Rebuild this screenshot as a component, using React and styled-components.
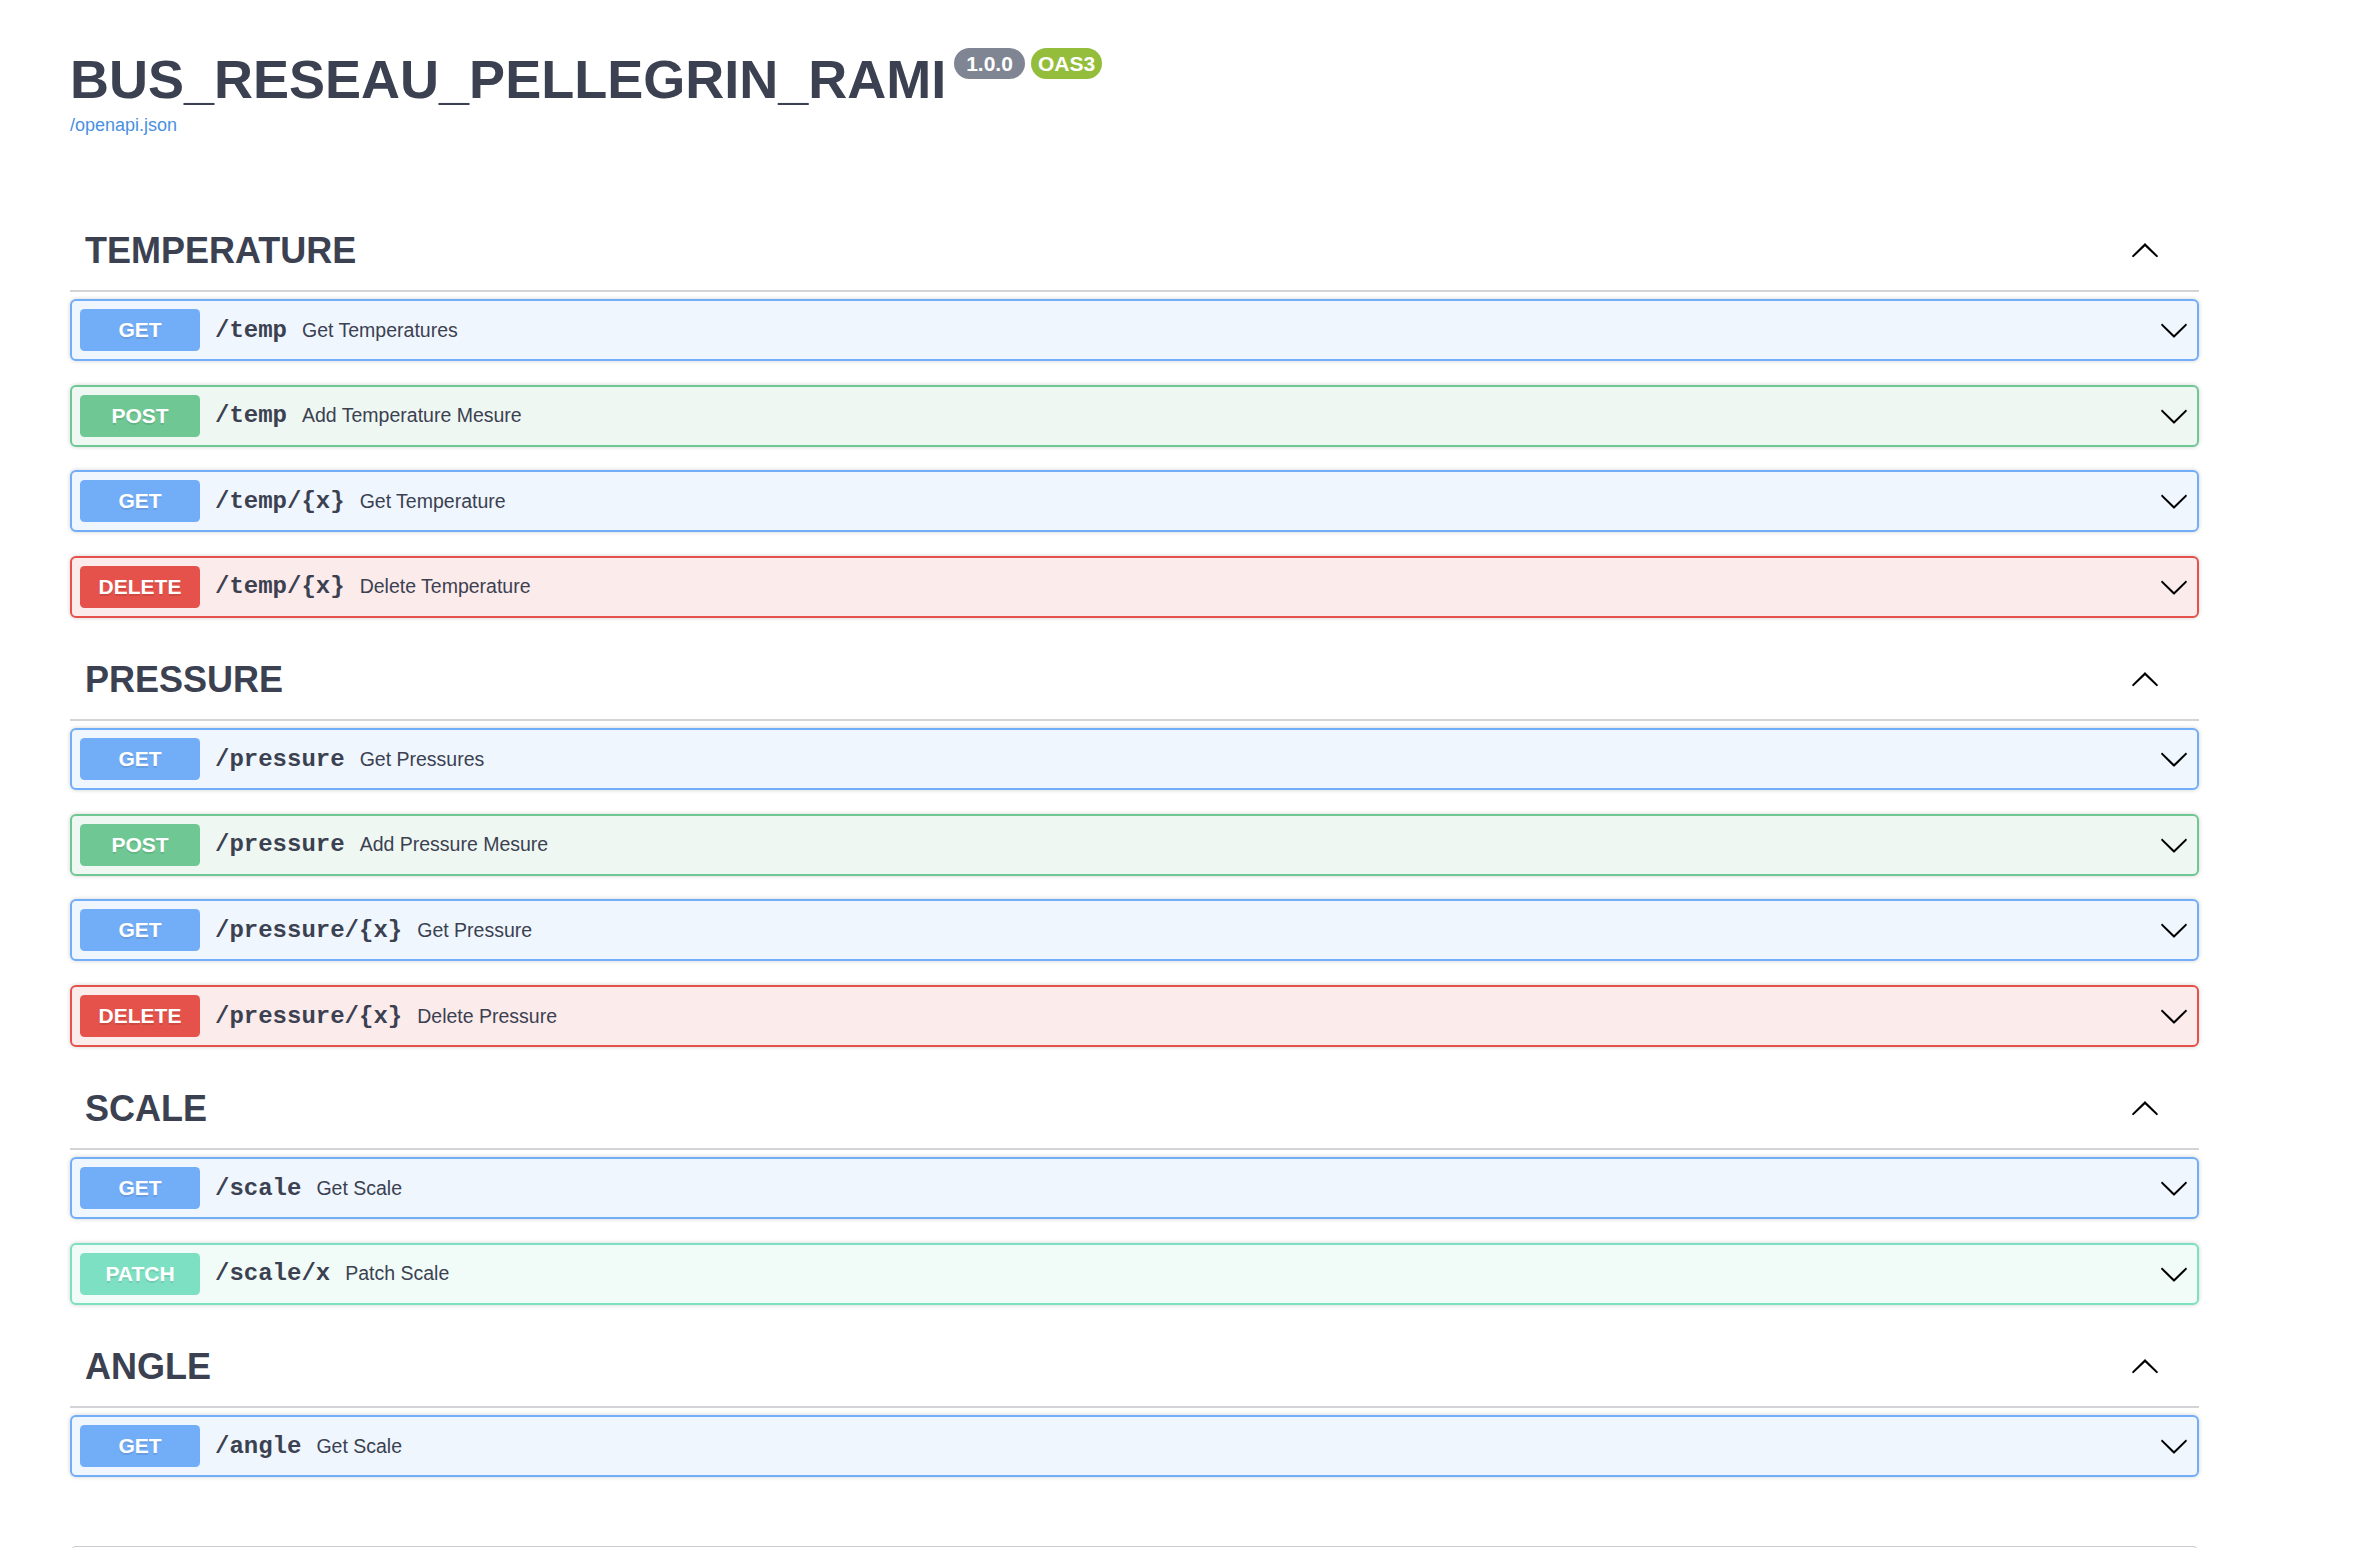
import React from "react";
import styled, { createGlobalStyle } from "styled-components";

const GlobalStyle = createGlobalStyle`
  html { overflow: hidden; }
  body {
    margin: 0;
    background: #ffffff;
    font-family: "Liberation Sans", Arial, sans-serif;
    color: #3b4151;
  }
  * { box-sizing: border-box; }
`;

const METHODS = {
  get: { main: "#72adf7", bg: "#eff6fe" },
  post: { main: "#6fc794", bg: "#eff7f3" },
  delete: { main: "#e5514b", bg: "#fcebeb" },
  patch: { main: "#7de0c2", bg: "#f1fbf8" },
};

const Wrapper = styled.div`
  display: flex;
  flex-direction: column;
  width: 2189px;
  margin-left: 40px;
  padding: 0 30px;
`;

const Info = styled.div`
  display: flex;
  flex-direction: column;
  padding-top: 48px;
  margin-bottom: 76.5px;
`;

const Title = styled.h2`
  display: flex;
  align-items: flex-start;
  margin: 0;
  height: 62px;
  font-size: 54px;
  line-height: 62px;
  font-weight: 700;
  color: #3b4151;
`;

const Badge = styled.small`
  display: inline-flex;
  align-items: center;
  height: 31px;
  margin: 0 0 0 ${(p) => (p.$stamp ? 6 : 8)}px;
  padding: 0 ${(p) => (p.$stamp ? 7 : 12)}px;
  border-radius: 40px;
  background: ${(p) => (p.$stamp ? "#93bd3b" : "#7f8592")};
  color: #ffffff;
  font-size: 21px;
  font-weight: 700;
  line-height: 31px;
`;

const SpecLink = styled.a`
  display: block;
  margin-top: 5px;
  font-size: 18px;
  line-height: 21px;
  color: #4990e2;
  text-decoration: none;
`;

const TagSection = styled.section`
  display: flex;
  flex-direction: column;
`;

const TagHeading = styled.h3`
  display: flex;
  align-items: center;
  height: 79px;
  margin: 0 0 7.5px;
  padding: 0 30px 0 15px;
  border-bottom: 2px solid #d3d4d7;
  font-size: 36px;
  font-weight: 700;
  color: #3b4151;
`;

const TagName = styled.span`
  flex: 1 1 auto;
`;

const IconButton = styled.button`
  display: flex;
  align-items: center;
  justify-content: center;
  padding: 0 ${(p) => p.$pad}px;
  border: none;
  background: none;
  cursor: pointer;
  svg {
    display: block;
    width: 30px;
    height: 30px;
    fill: #000000;
  }
`;

const OpBlock = styled.div`
  display: flex;
  align-items: center;
  height: 62px;
  margin: 0 0 23.67px;
  padding: 0 8px;
  border: 2px solid ${(p) => METHODS[p.$method].main};
  border-radius: 6px;
  background: ${(p) => METHODS[p.$method].bg};
  box-shadow: 0 0 4.5px rgba(0, 0, 0, 0.19);
`;

const Method = styled.span`
  display: block;
  min-width: 120px;
  height: 42px;
  border-radius: 4.5px;
  background: ${(p) => METHODS[p.$method].main};
  color: #ffffff;
  font-size: 21px;
  font-weight: 700;
  line-height: 42px;
  text-align: center;
  text-shadow: 0 1.5px 0 rgba(0, 0, 0, 0.1);
`;

const Path = styled.span`
  padding: 0 15px;
  font-family: "Liberation Mono", "Courier New", monospace;
  font-size: 24px;
  font-weight: 700;
  color: #3b4151;
`;

const Description = styled.span`
  flex: 1 1 auto;
  font-size: 19.5px;
  color: #3b4151;
`;

const Models = styled.section`
  height: 72px;
  margin-top: 45px;
  border: 1.5px solid #c9cbd0;
  border-radius: 6px;
`;

const ArrowDown = () => (
  <svg viewBox="0 0 20 20" aria-hidden="true">
    <path d="M17.418 6.109c.272-.268.709-.268.979 0s.271.701 0 .969l-7.908 7.83c-.27.268-.707.268-.979 0l-7.908-7.83c-.27-.268-.27-.701 0-.969.271-.268.709-.268.979 0L10 13.25l7.418-7.141z" />
  </svg>
);

const ArrowUp = () => (
  <svg viewBox="0 0 20 20" aria-hidden="true">
    <path d="M17.418 13.891c.272.268.709.268.979 0s.271-.701 0-.969l-7.908-7.83c-.27-.268-.707-.268-.979 0l-7.908 7.83c-.27.268-.27.701 0 .969.271.268.709.268.979 0L10 6.75l7.418 7.141z" />
  </svg>
);

const TAGS = [
  {
    name: "TEMPERATURE",
    ops: [
      { method: "get", path: "/temp", summary: "Get Temperatures" },
      { method: "post", path: "/temp", summary: "Add Temperature Mesure" },
      { method: "get", path: "/temp/{x}", summary: "Get Temperature" },
      { method: "delete", path: "/temp/{x}", summary: "Delete Temperature" },
    ],
  },
  {
    name: "PRESSURE",
    ops: [
      { method: "get", path: "/pressure", summary: "Get Pressures" },
      { method: "post", path: "/pressure", summary: "Add Pressure Mesure" },
      { method: "get", path: "/pressure/{x}", summary: "Get Pressure" },
      { method: "delete", path: "/pressure/{x}", summary: "Delete Pressure" },
    ],
  },
  {
    name: "SCALE",
    ops: [
      { method: "get", path: "/scale", summary: "Get Scale" },
      { method: "patch", path: "/scale/x", summary: "Patch Scale" },
    ],
  },
  {
    name: "ANGLE",
    ops: [{ method: "get", path: "/angle", summary: "Get Scale" }],
  },
];

export default function App() {
  return (
    <>
      <GlobalStyle />
      <Wrapper>
        <Info>
          <Title>
            <span>BUS_RESEAU_PELLEGRIN_RAMI</span>
            <Badge>1.0.0</Badge>
            <Badge $stamp>OAS3</Badge>
          </Title>
          <SpecLink href="#">/openapi.json</SpecLink>
        </Info>

        {TAGS.map((tag) => (
          <TagSection key={tag.name}>
            <TagHeading>
              <TagName>{tag.name}</TagName>
              <IconButton $pad={9} aria-label="collapse">
                <ArrowUp />
              </IconButton>
            </TagHeading>
            {tag.ops.map((op, i) => (
              <OpBlock key={i} $method={op.method}>
                <Method $method={op.method}>{op.method.toUpperCase()}</Method>
                <Path>{op.path}</Path>
                <Description>{op.summary}</Description>
                <IconButton $pad={0} aria-label="expand">
                  <ArrowDown />
                </IconButton>
              </OpBlock>
            ))}
          </TagSection>
        ))}

        <Models aria-label="Schemas" />
      </Wrapper>
    </>
  );
}
